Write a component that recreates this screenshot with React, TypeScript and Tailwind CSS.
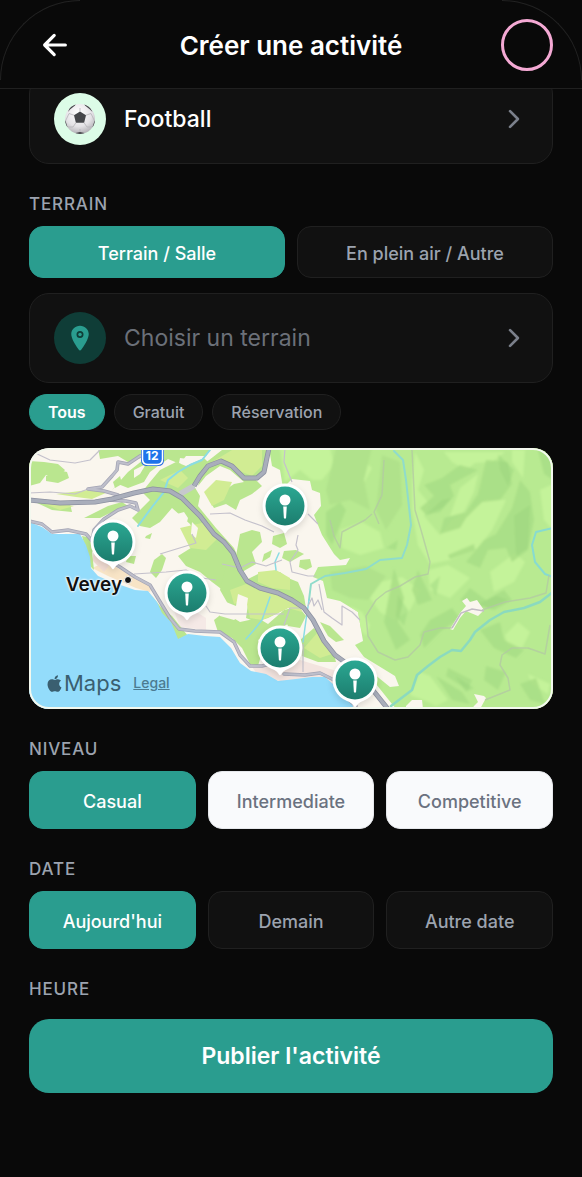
import { useState, type ReactNode } from "react";
import { IoArrowBack, IoChevronForward, IoLocation } from "react-icons/io5";
import { FaApple } from "react-icons/fa";

const MAP = { x: 29, y: 448, w: 524, h: 261 };

const PINS = [
  { name: "Terrain Vevey centre", x: 113, y: 542 },
  { name: "Terrain Blonay", x: 284.5, y: 506 },
  { name: "Terrain La Tour", x: 186.5, y: 593 },
  { name: "Terrain Clarens", x: 279.5, y: 648 },
  { name: "Terrain Montreux", x: 354.5, y: 680 },
];

function SoccerBall() {
  return (
    <svg viewBox="0 0 32 32" className="size-8" aria-hidden="true">
      <defs>
        <radialGradient id="ball" cx="45%" cy="30%" r="75%">
          <stop offset="0" stopColor="#ffffff" />
          <stop offset="0.6" stopColor="#e4e2e6" />
          <stop offset="1" stopColor="#a9a7ac" />
        </radialGradient>
        <clipPath id="ballClip">
          <circle cx="16" cy="16" r="15" />
        </clipPath>
      </defs>
      <circle cx="16" cy="16" r="15" fill="url(#ball)" />
      <g clipPath="url(#ballClip)">
        <g fill="#45464a">
          <path d="M10 12.200 16 8.500l6 3.700-1.900 7.600h-8.200z" />
          <path d="M4 9 6 4l6-3.500-1 2-5 4z" />
          <path d="M21 2.500 20 .5 26 4l2.500 5-2.500-2.500z" />
          <path d="M0 16l1.500 2 2 6L1 24z" />
          <path d="M32 16l-1.500 2-2 6L31 24z" />
          <path d="M10.500 30.200 16 29l5.500 1.200L20 32h-8z" />
        </g>
        <g fill="none" stroke="#b5b4b9" strokeWidth="0.800">
          <path d="M16 8.500V5M10 12.200 5 10.500M22 12.200l5-1.700M11.900 19.800 9 24M20.100 19.800 23 24M9 24l-5.500 0M23 24l5.500 0M16 29v-3M5 10.500 1.500 18M27 10.500l3.500 7.500" />
        </g>
      </g>
    </svg>
  );
}

function Terrain() {
  return (
    <svg
      viewBox="29 448 524 261"
      preserveAspectRatio="xMidYMid slice"
      className="block size-full"
      aria-hidden="true"
    >
      <defs>
        <filter id="soft" x="-5%" y="-5%" width="110%" height="110%">
          <feGaussianBlur stdDeviation="1" />
        </filter>
        <clipPath id="forest">
          <path d="M269 448 272 466 280 470 283 488 292 479 310 481 312 490 320 493 321 506 314 515 322 535 334 554 340 560 350 558 346 565 318 567 313 577 323 581 327 598 340 601 358 612 363 641 355 645 364 657 395 676 399 686 390 687 374 674 376 684 396 709H553V448z" />
        </clipPath>
      </defs>
      <rect x="29" y="448" width="524" height="261" fill="#faf6ee" />

      {/* built-up area around the towns */}
      <path d="M92 568 106 562 114 566 135 577 152 586 150 592 136 588 108 576z" fill="#f8e4c6" />
      <path d="M92 560 97 540 112 562 104 572z" fill="#f1dcd2" />
      <path d="M250 664 280 668 300 660 340 672 354 700 340 690 300 684 260 678z" fill="#f3e4df" />
      <path d="M170 600 190 608 206 618 206 630 180 627z" fill="#f5e9e6" />

      {/* woods and meadows west of the forest */}
      <g fill="#bae68f">
        <path d="M29 461 44 462 58 464 65 470 60 476 46 475 40 483 29 486z" />
        <path d="M46 476 58 470 67 472 69 478 58 483 46 481z" />
        <path d="M98 448H212L206 456 186 456 180 464 168 459 158 466 150 472 144 482 128 488 118 484 112 490 128 472 148 456 128 462 118 456 100 459z" />
        <path d="M113 482 120 476 122 484 115 488z" />
        <path d="M142 492 150 482 160 470 176 462 186 466 204 458 210 464 194 486 200 496 198 506 216 528 234 548 240 562 233 568 238 590 228 594 212 582 200 572 186 566 178 556 194 546 198 540 190 524 172 508 160 522 150 528 140 526 132 518 150 500z" />
        <path d="M204 464 222 450 268 450 266 470 256 480 262 486 252 494 240 500 236 510 226 504 222 492 234 484 244 482 230 470 220 466 206 476 198 486z" />
        <path d="M209 500 222 484 232 492 226 504 214 508z" />
        <path d="M35 502 70 504 72 512 52 510z" />
        <path d="M84 518 108 506 122 502 128 506 108 514 100 518z" />
        <path d="M82 536 92 538 98 545 92 552 94 570 90 566z" />
        <path d="M146 536 152 533 150 539 145 538z" />
        <path d="M154 560 162 554 166 558 162 570 156 578 150 572z" />
        <path d="M240 534 252 530 260 532 262 542 252 552 256 564 242 572 236 556z" />
        <path d="M273 536 284 533 287 544 280 548 272 544z" />
        <path d="M284 551 296 550 304 554 290 562 282 558z" />
        <path d="M300 560 310 559 312 567 306 570 299 567z" />
        <path d="M264 554 272 550 270 557 262 562z" />
        <path d="M226 566 240 566 246 580 262 572 280 572 288 578 298 582 304 596 306 608 292 606 280 612 268 618 256 622 246 618 248 604 240 610 228 604 220 590z" />
        <path d="M214 620 224 612 240 622 258 618 268 624 284 610 300 606 292 622 272 632 258 640 262 652 258 666 250 664 242 648 232 638 218 632z" />
        <path d="M282 612 298 606 306 616 300 628 288 626z" />
        <path d="M300 640 314 628 320 634 334 654 336 662 318 662 302 656z" />
        <path d="M320 622 330 626 338 634 344 640 336 642 328 636z" />
        <path d="M152 596 160 606 172 616 188 636 176 640 170 626 158 612z" />
        <path d="M194 600 204 592 208 600 198 610z" />
        <path d="M128 556 136 556 134 564 126 562z" />
      </g>
      <g fill="#d1ec93">
        <path d="M56 494 88 490 108 492 92 499 76 497z" />
        <path d="M212 462 232 450 262 450 262 466 252 476 242 472 228 462z" />
        <path d="M204 492 216 480 232 482 224 500 212 506z" />
        <path d="M230 590 246 584 258 590 284 596 300 604 302 612 288 608 276 614 262 620 250 618 246 600 234 604z" />
        <path d="M258 572 276 570 290 578 290 590 272 588 258 582z" />
        <path d="M304 648 318 632 332 654 320 658z" />
        <path d="M180 528 206 522 218 538 206 550 190 548z" />
        <path d="M160 480 180 470 188 478 178 488z" />
        <path d="M34 500 46 502 74 506 60 510z" />
      </g>
      <g fill="#faf6ee">
        <path d="M177 514 184 512 188 518 186 526 179 522z" />
        <path d="M192 522 198 528 196 538 191 534z" />
        <path d="M274 466 281 467 283 476 276 479z" />
        <path d="M180 458 188 459 186 464 179 463z" />
        <path d="M134 470 146 464 140 474 134 478z" />
        <path d="M216 604 226 602 236 606 238 594 248 598 246 612 234 620 220 616z" />
      </g>
      <path d="M40 526 54 530 66 534 50 534z" fill="#ffffff" />

      {/* forest with soft hill shading */}
      <g clipPath="url(#forest)">
        <rect x="240" y="448" width="313" height="261" fill="#b8ea91" />
        <g filter="url(#soft)">
          <g fill="#c4f39a">
            <path d="M280 448H330L334 465 322 480 312 480 300 470 285 482z" />
            <path d="M352 450 372 468 360 490 348 482 354 466z" />
            <path d="M340 530 362 522 380 532 384 548 360 555 342 548z" />
            <path d="M415 452 424 470 418 490 430 505 424 516 440 535 452 520 486 500 506 500 492 530 478 548 450 560 430 564 418 545 412 510 412 480z" />
            <path d="M450 516 460 488 478 474 474 492 462 516z" />
            <path d="M444 452H505L492 462 475 463 466 470 452 462z" />
            <path d="M512 450 525 450 523 478 512 462z" />
            <path d="M370 598 380 582 402 577 420 590 410 610 394 620 380 612z" />
            <path d="M428 570 448 565 470 578 450 598 430 590z" />
            <path d="M490 572 515 553 525 562 514 582 494 592z" />
            <path d="M505 635 518 622 530 632 522 648 508 646z" />
            <path d="M528 674 550 684 548 694 532 684z" />
            <path d="M350 606 362 612 370 625 366 636 356 624z" />
            <path d="M410 695 420 672 430 676 448 700 436 706 424 700z" />
            <path d="M540 490 553 484V530L544 520z" />
          </g>
          <g fill="#a9de86" opacity="0.850">
            <path d="M424 485 442 478 460 465 478 470 450 485 454 496 442 508 426 515 420 508 434 496z" />
            <path d="M486 460 508 462 512 484 500 500 482 502 466 518 460 528 440 534 444 518 466 512 478 494z" />
            <path d="M520 480 530 492 534 520 528 550 512 562 506 548 488 550 480 568 466 562 484 540 496 534 512 508z" />
            <path d="M448 555 474 544 475 550 450 559z" />
            <path d="M394 568 404 598 398 622 410 640 396 650 384 622 390 590z" />
            <path d="M418 570 432 600 418 605 412 590z" />
            <path d="M470 588 486 600 504 590 512 600 494 610 478 606 460 600z" />
            <path d="M430 620 452 608 460 618 440 632 424 648 420 635z" />
            <path d="M436 676 462 692 470 704 452 700z" />
            <path d="M448 668 472 680 468 690 446 676z" />
            <path d="M480 630 500 622 504 640 524 650 516 658 494 648z" />
            <path d="M486 666 506 672 498 690 484 680z" />
            <path d="M326 512 340 502 346 510 340 525 332 545 326 535z" />
            <path d="M520 684 536 678 545 704 530 700z" />
            <path d="M538 450H553V480L544 474z" />
          </g>
          <g fill="#b0e28b">
            <path d="M336 448H372L364 480 370 510 350 500 330 505 326 490z" />
            <path d="M330 572 366 566 386 576 368 600 350 598 332 590z" />
            <path d="M382 455 400 462 402 505 386 530 376 510z" />
          </g>
          <g fill="#97d27b" opacity="0.400">
            <path d="M426 515 442 500 452 498 440 512z" />
            <path d="M514 516 530 505 528 548 516 556z" />
            <path d="M498 454 514 470 508 486 500 470z" />
            <path d="M398 595 408 610 404 626 396 616z" />
            <path d="M386 548 398 540 396 550z" />
            <path d="M478 604 496 596 508 600 490 608z" />
            <path d="M430 585 440 576 436 596z" />
            <path d="M455 676 474 688 466 692z" />
          </g>
        </g>
      </g>

      {/* clearings */}
      <g fill="#faf6ee">
        <path d="M450 629 460 613 466 606 462 601 467 598 470 602 477 600 484 610 478 616 466 611 460 618 453 630z" />
        <path d="M406 706 412 700 422 700 423 709H406z" />
        <path d="M474 706 478 702 474 694 484 696 486 698 480 709H472z" />
      </g>

      {/* lake */}
      <path
        d="M29 522 42 527 52 534 66 534 80 534 86 545 90 557 91 568 98 576 112 582 135 590 148 591 157 602 162 613 171 622 178 639 188 634 205 636 220 637 231 648 240 663 251 671 266 674 278 681 296 679 312 677 325 677 334 685 342 697 352 704 354 709H29z"
        fill="#93dcfb"
      />

      {/* streams */}
      <g fill="none" stroke="#8adce4" strokeWidth="2" strokeLinejoin="round" strokeLinecap="round">
        <path d="M210 450 202 460 190 465 178 472 168 480 164 492 152 507 138 526" />
        <path strokeWidth="1.500" d="M270 597 262 620 254 630 246 639M279 553 275 562 276 570" />
        <path strokeWidth="2" stroke="#8fdccb" d="M394 451 403 460 406 480 411 525 407 545 402 558 380 560 366 569 345 573 325 576 311 584 309 600" />
        <path strokeWidth="1.500" d="M309 600 306 620 303 642" />
        <path strokeWidth="2.500" stroke="#8bdabf" d="M391 706 412 690 417 675 428 666 440 657 452 650 461 651 470 640 475 632 490 620 504 612 524 608 540 602 553 592" />
        <path strokeWidth="2" stroke="#87dbd0" d="M553 528 536 532 532 545 535 562 545 574 553 577" />
      </g>

      {/* paths and minor roads */}
      <g fill="none" stroke="#c4c1cc" strokeWidth="1.200" strokeLinejoin="round">
        <path d="M29 493 50 492 75 494 88 489M33 452 50 460 75 463 90 460 100 450" />
        <path d="M210 514 230 513 245 520 262 526 274 532M285 448 284 462 292 482M308 514 318 524M298 535 296 545 298 550 290 562 292 572 308 576 316 576" />
        <path d="M222 564 240 568 252 562 266 566 282 560M206 606 210 612 225 614 245 614 262 614 284 614M284 625 290 608 305 608" />
        <path d="M303 644 303 672M160 554 196 543 192 534M134 574 166 572 186 570 202 578 216 580" />
        <path d="M319 584 324 612 332 618 342 625 342 606 352 612 360 620M308 606 312 598 314 606 318 600 322 610" />
      </g>
      <g fill="none" stroke="#b3c8a4" strokeWidth="1.500" strokeLinejoin="round" opacity="0.750">
        <path d="M384 460 382 495 374 512 379 524M412 450 415 510 421 530 430 562 428 574 415 577 400 586 386 592 376 600 366 616 368 636 378 652 395 660 408 657 420 645 424 632 440 628 452 628" />
        <path d="M482 610 505 602 530 598 546 593 549 575M485 700 500 694 510 690 508 678 500 665 502 655 512 648 528 648 545 654 550 625" />
        <path d="M330 520 334 536 340 548 342 532 365 520 372 514" />
      </g>
      <path d="M452 628 461 613 472 609 484 611" fill="none" stroke="#c2bcc4" strokeWidth="1.500" />

      {/* secondary roads */}
      <g fill="none" strokeLinejoin="round" strokeLinecap="round">
        <g stroke="#a3a4b4" strokeWidth="3.500">
          <path d="M92 541 94 530 104 519 118 510 130 506 138 510 136 503 126 501 108 500" />
          <path d="M118 495 104 491 88 489 102 487 112 476 117 470 118 462 128 464 140 456 150 453" />
          <path d="M29 521 42 524 52 532 68 530 86 534 94 543 108 560 120 567 135 577 150 585 159 600 170 618 179 629 195 631 220 632 234 642 240 655 250 666 262 666 270 664" />
          <path d="M284 674 305 675 320 673 334 680 342 694 356 706" />
        </g>
        <g stroke="#bebfcb" strokeWidth="2">
          <path d="M92 541 94 530 104 519 118 510 130 506 138 510 136 503 126 501 108 500" />
          <path d="M118 495 104 491 88 489 102 487 112 476 117 470 118 462 128 464 140 456 150 453" />
          <path d="M29 521 42 524 52 532 68 530 86 534 94 543 108 560 120 567 135 577 150 585 159 600 170 618 179 629 195 631 220 632 234 642 240 655 250 666 262 666 270 664" />
          <path d="M284 674 305 675 320 673 334 680 342 694 356 706" />
        </g>
        <path d="M180 494 194 486" stroke="#c6c8cd" strokeWidth="6" strokeLinecap="butt" />
      </g>

      {/* motorway */}
      <g fill="none" strokeLinejoin="round">
        <g stroke="#8c91a1" strokeWidth="5">
          <path d="M29 500 60 503 95 502 112 499 134 493 153 489 170 491 182 498 200 516 214 534 224 542 233 553 240 570 247 581 260 588 278 593 292 600 304 608 313 620 324 641 335 655 350 666 366 682 376 694 388 709" />
          <path d="M194 486 200 476 208 466 221 461 232 466 244 478 257 478 264 472 269 448" />
        </g>
        <g stroke="#a9aebb" strokeWidth="3.500">
          <path d="M29 500 60 503 95 502 112 499 134 493 153 489 170 491 182 498 200 516 214 534 224 542 233 553 240 570 247 581 260 588 278 593 292 600 304 608 313 620 324 641 335 655 350 666 366 682 376 694 388 709" />
          <path d="M194 486 200 476 208 466 221 461 232 466 244 478 257 478 264 472 269 448" />
        </g>
      </g>

      {/* road shield */}
      <path d="M141 440H164V460Q164 466 158 466H147Q141 466 141 460z" fill="#2b6fe0" />
      <path d="M142.500 440H162.500V459Q162.500 464.500 157 464.500H148Q142.500 464.500 142.500 459z" fill="#1f74ea" stroke="#ffffff" strokeWidth="1.500" />
      <circle cx="128" cy="580" r="3.500" fill="#111111" stroke="#ffffff" strokeWidth="1" />
    </svg>
  );
}

function Pin({ name, x, y }: { name: string; x: number; y: number }) {
  return (
    <button
      type="button"
      aria-label={name}
      className="absolute -translate-x-1/2 -translate-y-6"
      style={{
        left: `${((x - MAP.x) / MAP.w) * 100}%`,
        top: `${((y - MAP.y) / MAP.h) * 100}%`,
      }}
    >
      <svg viewBox="0 0 48 56" className="block h-14 w-12 drop-shadow-md" aria-hidden="true">
        <defs>
          <linearGradient id="pinFill" x1="0" y1="0" x2="0" y2="1">
            <stop offset="0" stopColor="#2ba792" />
            <stop offset="1" stopColor="#1c7d6e" />
          </linearGradient>
        </defs>
        <path
          d="M24 1.500a22.500 22.500 0 0 1 8 43.500c-3.500 1.300-5.500 3-7 5.500q-1 1.500-2 0c-1.500-2.500-3.500-4.200-7-5.500a22.500 22.500 0 0 1 8-43.500z"
          fill="#ffffff"
        />
        <circle cx="24" cy="24" r="19.500" fill="url(#pinFill)" />
        <circle cx="24" cy="18" r="5.500" fill="#ffffff" />
        <path d="M22.200 24.500h3.600l-.7 11.500q-1.100 1.500-2.200 0z" fill="#ffffff" />
      </svg>
    </button>
  );
}

function PickerRow({ icon, iconBg, label, tone }: { icon: ReactNode; iconBg: string; label: string; tone: string }) {
  return (
    <button
      type="button"
      className="flex h-[90px] w-full items-center gap-[18px] rounded-[20px] border border-[#202020] bg-[#111111] pl-6 pr-6 text-left"
    >
      <span className={`flex size-[52px] items-center justify-center rounded-full ${iconBg}`}>{icon}</span>
      <span className={`flex-1 text-[23px] ${tone}`}>{label}</span>
      <IoChevronForward className="size-7 text-[#7b808b]" aria-hidden="true" />
    </button>
  );
}

function SectionLabel({ children }: { children: ReactNode }) {
  return <h2 className="mb-[10px] mt-7 text-[17px] font-medium leading-6 tracking-wider text-[#9ca3af]">{children}</h2>;
}

const IDLE = "border-[#202020] bg-[#111111] text-[#9ca3af]";
const IDLE_LIGHT = "border-[#e5e7eb] bg-[#f9fafc] text-[#6b7280]";
const ACTIVE = "border-[#2a9d8f] bg-[#2a9d8f] text-white";

function Segments({ options, columns, height, idle = IDLE }: { options: string[]; columns: string; height: string; idle?: string }) {
  const [selected, setSelected] = useState(options[0]);
  return (
    <div className={`grid gap-3 ${columns}`}>
      {options.map((option) => (
        <button
          key={option}
          type="button"
          aria-pressed={option === selected}
          onClick={() => setSelected(option)}
          className={`whitespace-nowrap rounded-[14px] border pt-[2px] text-[18px] font-medium ${height} ${option === selected ? ACTIVE : idle}`}
        >
          {option}
        </button>
      ))}
    </div>
  );
}

function Filters() {
  const options = ["Tous", "Gratuit", "Réservation"];
  const [selected, setSelected] = useState(options[0]);
  return (
    <div className="mt-[11px] flex gap-[9px]">
      {options.map((option) => (
        <button
          key={option}
          type="button"
          aria-pressed={option === selected}
          onClick={() => setSelected(option)}
          className={`h-9 rounded-full border px-[18px] text-[16px] ${option === selected ? `font-semibold ${ACTIVE}` : `font-medium ${IDLE}`}`}
        >
          {option}
        </button>
      ))}
    </div>
  );
}

export default function App() {
  return (
    <div className="min-h-screen bg-[#090909] font-['Inter','Liberation_Sans',sans-serif]">
      <header className="sticky top-0 z-10 flex h-[89px] items-center justify-between border-b border-[#202020] bg-[#090909] px-[29px] pt-[2px]">
        <span className="absolute left-0 top-0 size-20 rounded-tl-full border-l border-t border-[#222222]" />
        <span className="absolute right-0 top-0 size-20 rounded-tr-full border-r border-t border-[#222222]" />
        <button type="button" aria-label="Retour" className="flex w-[52px] justify-center text-white">
          <IoArrowBack className="size-[34px]" />
        </button>
        <h1 className="text-[26px] font-semibold text-white">Créer une activité</h1>
        <button type="button" aria-label="Profil" className="size-[52px] rounded-full border-[3px] border-[#f4a9d4]" />
      </header>

      <main className="-mt-[15px] px-[29px] pb-[84px]">
        <PickerRow icon={<SoccerBall />} iconBg="bg-[#dcfce7]" label="Football" tone="font-medium text-white" />

        <SectionLabel>TERRAIN</SectionLabel>
        <Segments options={["Terrain / Salle", "En plein air / Autre"]} columns="grid-cols-2" height="h-[52px]" />
        <div className="mt-[15px]">
          <PickerRow
            icon={<IoLocation className="size-7 text-[#2a9d8f]" aria-hidden="true" />}
            iconBg="bg-[#0f3d37]"
            label="Choisir un terrain"
            tone="text-[#6b7079]"
          />
        </div>
        <Filters />

        <div className="relative mt-[18px] aspect-[524/261] overflow-hidden rounded-[20px]">
          <Terrain />
          <span className="absolute left-[23.5%] top-0 -translate-x-1/2 text-[12px] font-bold leading-4 text-white">12</span>
          <span className="absolute left-[7%] top-[47%] text-[19px] font-semibold leading-7 text-[#111111] [text-shadow:0_0_2px_#fff,0_0_2px_#fff,0_0_3px_#fff]">
            Vevey
          </span>
          {PINS.map((pin) => (
            <Pin key={pin.name} {...pin} />
          ))}
          <div className="absolute bottom-3 left-4 flex items-center text-[#3a5f70]">
            <FaApple className="size-[19px]" aria-hidden="true" />
            <span className="text-[22px] leading-7">Maps</span>
            <a href="#legal" className="ml-3 text-[14px] font-medium leading-7 text-[#4c7b91] underline">
              Legal
            </a>
          </div>
          <span className="pointer-events-none absolute inset-0 rounded-[20px] border-2 border-[#f3f8ee]" />
        </div>

        <SectionLabel>NIVEAU</SectionLabel>
        <Segments options={["Casual", "Intermediate", "Competitive"]} columns="grid-cols-3" height="h-[58px]" idle={IDLE_LIGHT} />

        <SectionLabel>DATE</SectionLabel>
        <Segments options={["Aujourd'hui", "Demain", "Autre date"]} columns="grid-cols-3" height="h-[58px]" />

        <SectionLabel>HEURE</SectionLabel>
        <button type="submit" className="mt-2 h-[74px] w-full rounded-[20px] bg-[#2a9d8f] text-[23px] font-semibold text-white">
          Publier l'activité
        </button>
      </main>
    </div>
  );
}
